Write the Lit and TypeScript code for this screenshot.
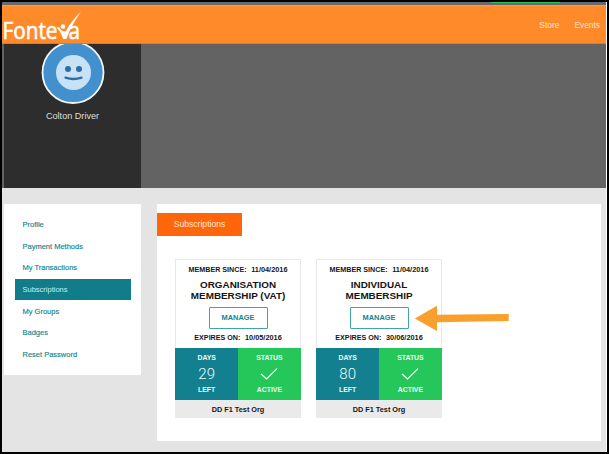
import { LitElement, html, css } from "lit";
import { customElement, property } from "lit/decorators.js";
import { classMap } from "lit/directives/class-map.js";

@customElement("membership-card")
class MembershipCard extends LitElement {
  @property({ type: Array }) titleLines: string[] = [];
  @property() since = "";
  @property() expires = "";
  @property() days = "";
  @property() org = "";

  static styles = css`
    :host { display: flex; flex-direction: column; align-items: center; width: 125.5px; height: 159px;
      box-sizing: border-box; color: #151515; font-weight: bold; background: #fff;
      box-shadow: inset 0 0 0 1px #e6e8ec; white-space: nowrap; }
    .row { display: flex; justify-content: center; gap: 4.6px; font-size: 7.15px; line-height: 10px; }
    .date { font-size: 7.35px; }
    .since { margin-top: 6px; }
    .title { margin-top: 5px; font-size: 9.9px; line-height: 10.5px; text-align: center; }
    .manage { box-sizing: border-box; width: 59px; height: 22px; margin: 6px 0 4px; border: 1px solid #3fa3b0;
      border-radius: 1px; background: #fff; color: #11848f; font: bold 7.4px/20px "Liberation Sans", Arial, sans-serif; padding: 0; text-align: center; }
    .stats { display: grid; grid-template-columns: 1fr 1fr; width: 100%; height: 52px; margin-top: 5px;
      color: #eefafa; font-size: 6.9px; }
    .stat { display: flex; flex-direction: column; align-items: center; line-height: 10px; padding-top: 5px; box-sizing: border-box; }
    .teal { background: #12808f; }
    .green { background: #25c75a; }
    .big { height: 22px; display: flex; align-items: center; }
    .num { font: 300 15px/23px Roboto, "Liberation Sans", sans-serif; }
    .foot { width: 100%; height: 18px; background: #eaeaea; text-align: center; font-size: 7.3px; line-height: 19px; }
  `;

  render() {
    return html`
      <div class="row since"><span>MEMBER SINCE:</span><span class="date">${this.since}</span></div>
      <div class="title">${this.titleLines.map((l) => html`<div>${l}</div>`)}</div>
      <button class="manage">MANAGE</button>
      <div class="row"><span>EXPIRES ON:</span><span class="date">${this.expires}</span></div>
      <div class="stats">
        <div class="stat teal"><span>DAYS</span><span class="big num">${this.days}</span><span>LEFT</span></div>
        <div class="stat green"><span>STATUS</span><span class="big">
          <svg width="18" height="13" viewBox="0 0 18 13" fill="none" stroke="#fff" stroke-width="1.1"><path d="M1 6 6.500 11 17 .7" /></svg>
        </span><span>ACTIVE</span></div>
      </div>
      <div class="foot">${this.org}</div>`;
  }
}

@customElement("app-root")
class AppRoot extends LitElement {
  static styles = css`
    :host { display: block; width: 609px; height: 454px; box-sizing: border-box; background: #000; padding: 2px 2px 2px;
      font-family: "Liberation Sans", Arial, sans-serif; overflow: hidden; }
    .page { display: flex; flex-direction: column; width: 605px; height: 450px; box-sizing: border-box;
      background: #e4e4e4; border-right: 1px solid #fff; }
    .strip { height: 3px; background: #69696b; display: flex; justify-content: flex-end; }
    .progress { width: 69px; height: 1px; margin-right: 46px; background: #20c552; }
    .header { height: 39px; box-sizing: border-box; border-top: 1px solid #c9a78c; background: #ff8a2a; display: flex;
      justify-content: space-between; border-bottom: 1px solid #d97a30; }
    .nav { display: flex; gap: 15px; padding: 13px 6px 0 0; font-size: 8.4px; line-height: 12px; color: #ffe3c8; }
    .logo { display: block; overflow: visible; }
    .hero { height: 144px; background: #636363; display: flex; padding-left: 2px; }
    .who { width: 137px; background: #2d2d2d; display: flex; flex-direction: column; align-items: center; color: #dedede;
      font-size: 9.1px; line-height: 12px; overflow: hidden; }
    .avatar { display: block; margin-bottom: 5px; flex: none; }
    .body { display: flex; gap: 16px; padding: 16px 0 0 2px; align-items: flex-start; }
    .side { width: 137px; height: 171px; box-sizing: border-box; background: #fff; padding: 10px 10px 0 11px; }
    .item { height: 21.7px; line-height: 22px; padding-left: 7.5px; font-size: 7.5px; color: #12858f; -webkit-text-stroke: 0.15px #12858f; }
    .active { background: #127d8a; color: #c9eef0; -webkit-text-stroke: 0; height: 20.7px; line-height: 22px; margin-bottom: 1px; }
    .main { width: 444px; height: 237px; box-sizing: border-box; background: #fff; padding-top: 9px; position: relative; }
    .tab { width: 85px; height: 23px; background: #ff650a; color: #ffe7d3; font-size: 8.6px; line-height: 23px; text-align: center; }
    .cards { display: flex; gap: 15.5px; padding: 23px 0 0 18.3px; }
    .arrow { position: absolute; left: 257px; top: 101px; }
  `;

  items = ["Profile", "Payment Methods", "My Transactions", "Subscriptions", "My Groups", "Badges", "Reset Password"];
  memberships = [
    { title: ["ORGANISATION", "MEMBERSHIP (VAT)"], expires: "10/05/2016", days: "29" },
    { title: ["INDIVIDUAL", "MEMBERSHIP"], expires: "30/06/2016", days: "80" },
  ];

  render() {
    return html`<div class="page">
      <div class="strip"><div class="progress"></div></div>
      <header class="header">
        <svg class="logo" width="82" height="37" viewBox="2 6 82 37" fill="#fff" stroke="#fff" font-family="Open Sans, Noto Sans, sans-serif" font-size="23">
          <text x="2.500" y="38.500" textLength="55" lengthAdjust="spacingAndGlyphs" stroke-width=".6">Fonte</text>
          <text x="68.500" y="38.500" textLength="11.500" lengthAdjust="spacingAndGlyphs" stroke-width=".6">a</text>
          <circle cx="63" cy="26.500" r="2.300" stroke="none" />
          <path stroke="none" d="M56.500 27.500 59 27C60.500 30 62.500 31.500 65.800 31.500C69 24.500 74.500 18 81 11.500C75.500 19.500 70 29 66.300 39H63.200C61.500 34 59.500 30 56.500 27.500Z" />
        </svg>
        <nav class="nav"><span>Store</span><span>Events</span></nav>
      </header>
      <section class="hero"><div class="who">
        <svg class="avatar" width="64" height="61" viewBox="41 44 64 61">
          <circle cx="73" cy="72.500" r="30.500" fill="#4390cf" stroke="#f3f6f8" stroke-width="1.800" />
          <circle cx="73.500" cy="72.500" r="17.500" fill="#c8e2f5" />
          <circle cx="68" cy="69" r="3" fill="#2b6ea9" /><circle cx="79" cy="69" r="3" fill="#2b6ea9" />
          <path d="M65.500 77.700Q73.500 80.300 81.500 77.700" fill="none" stroke="#2b6ea9" stroke-width="2.300" stroke-linecap="round" />
        </svg>
        <span>Colton Driver</span>
      </div></section>
      <div class="body">
        <nav class="side">${this.items.map((t) => html`<div class=${classMap({ item: true, active: t === "Subscriptions" })}>${t}</div>`)}</nav>
        <main class="main">
          <div class="tab">Subscriptions</div>
          <div class="cards">${this.memberships.map((m) => html`<membership-card .titleLines=${m.title} since="11/04/2016"
            expires=${m.expires} days=${m.days} org="DD F1 Test Org"></membership-card>`)}</div>
          <svg class="arrow" width="96" height="26" viewBox="0 0 96 26" fill="#f9a02c"><path d="M.8 13.500 23 .8V9.700L94.700 9V16L23 17.200V26Z" /></svg>
        </main>
      </div>
    </div>`;
  }
}
